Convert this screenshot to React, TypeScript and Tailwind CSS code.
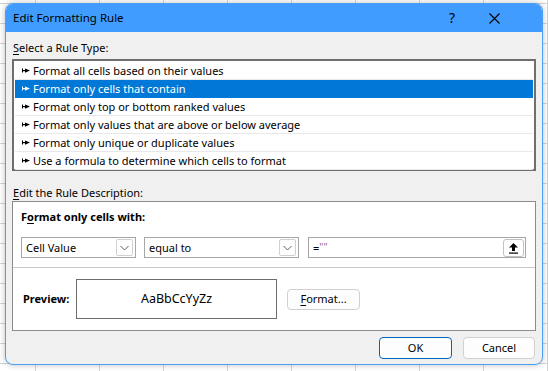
import React from "react";

const font = { fontFamily: '"Noto Sans", "Open Sans", sans-serif' };

function Arrow({ white }: { white?: boolean }) {
  const c = white ? "#ffffff" : "#000000";
  return (
    <svg width="8" height="7" viewBox="0 0 8 7" className="shrink-0">
      <rect x="0" y="1.5" width="1" height="4" fill={c} />
      <rect x="1" y="3" width="3" height="1.2" fill={c} />
      <path d="M3 1.5 L8 3.6 L3 5.7 Z" fill={c} />
    </svg>
  );
}

function Chevron() {
  return (
    <svg width="9" height="6" viewBox="0 0 9 6">
      <path d="M0.5 1 L4.5 5 L8.5 1" fill="none" stroke="#5f5f5f" strokeWidth="1" />
    </svg>
  );
}

const rules = [
  "Format all cells based on their values",
  "Format only cells that contain",
  "Format only top or bottom ranked values",
  "Format only values that are above or below average",
  "Format only unique or duplicate values",
  "Use a formula to determine which cells to format",
];

export default function App() {
  return (
    <div
      className="w-[548px] h-[371px] overflow-hidden bg-white bg-[linear-gradient(to_right,#d4d4d4_1px,transparent_1px),linear-gradient(to_bottom,#d4d4d4_1px,transparent_1px)] bg-[size:64px_20px] bg-[position:35px_3px] pt-[3px] pl-[5px]"
      style={font}
    >
      <div className="w-[538px] h-[362px] flex flex-col bg-[#f0f0f0] border border-[#4a9ff5] rounded-lg overflow-hidden shadow-[0_0_6px_rgba(0,0,0,0.25)] text-[11px] text-black">
        {/* Title bar */}
        <div className="h-[28px] shrink-0 bg-[#409cff] flex items-center pl-[7px]">
          <span className="text-[11.5px] leading-none">Edit Formatting Rule</span>
          <div className="flex-1" />
          <span className="text-[14px] leading-none mr-[34px] mt-[-1px]">?</span>
          <svg width="11" height="11" viewBox="0 0 11 11" className="mr-[42px]">
            <path d="M0.5 0.5 L10.5 10.5 M10.5 0.5 L0.5 10.5" stroke="#000" strokeWidth="1.1" />
          </svg>
        </div>

        {/* Body */}
        <div className="flex flex-col px-[6px]">
          <div className="mt-[8px] ml-[1px] h-[16px] leading-[16px]">
            <span className="underline underline-offset-2">S</span>elect a Rule Type:
          </div>
          <div className="mt-[3px] h-[112px] border-2 border-[#6f6f6f] bg-white p-[1px] flex flex-col">
            {rules.map((r, i) => {
              const sel = i === 1;
              return (
                <div
                  key={r}
                  className={
                    "h-[18px] shrink-0 flex items-center gap-[3px] pl-[7px] border-b " +
                    (sel ? "bg-[#0078d7] text-white border-[#0078d7]" : "text-black border-[#e8e8e8]")
                  }
                >
                  <Arrow white={sel} />
                  <span className="leading-none">{r}</span>
                </div>
              );
            })}
          </div>

          <div className="mt-[14px] ml-[1px] h-[16px] leading-[16px]">
            <span className="underline underline-offset-2">E</span>dit the Rule Description:
          </div>
          <div className="mt-[0px] h-[130px] border border-[#8c8c8c] bg-white flex flex-col">
            <div className="h-[66px] shrink-0 border-b border-[#c8c8c8] flex flex-col pl-[8px]">
              <div className="mt-[7px] font-bold leading-[16px] h-[16px]">
                F<span className="underline underline-offset-2">o</span>rmat only cells with:
              </div>
              <div className="mt-[12px] flex items-center">
                <div className="w-[115px] h-[21px] border border-[#a6a6a6] flex items-center justify-between pl-[4px] pr-[2px]">
                  <span className="leading-none">Cell Value</span>
                  <div className="w-[17px] h-[17px] border border-[#d0d0d0] rounded-[2px] flex items-center justify-center bg-white">
                    <Chevron />
                  </div>
                </div>
                <div className="ml-[8px] w-[155px] h-[21px] border border-[#a6a6a6] flex items-center justify-between pl-[4px] pr-[2px]">
                  <span className="leading-none">equal to</span>
                  <div className="w-[17px] h-[17px] border border-[#d0d0d0] rounded-[2px] flex items-center justify-center bg-white">
                    <Chevron />
                  </div>
                </div>
                <div className="ml-[9px] w-[218px] h-[21px] border border-[#a6a6a6] flex items-center justify-between pl-[4px] pr-[1px]">
                  <span className="leading-none">
                    =<span className="text-[#9a6a8a] text-[10px] align-top">""</span>
                  </span>
                  <div className="w-[21px] h-[18px] border border-[#c0c0c0] rounded-[3px] flex items-center justify-center bg-white">
                    <svg width="11" height="12" viewBox="0 0 11 12">
                      <path d="M5.5 1 L1 5.5 H4 V9 H7 V5.5 H10 Z" fill="#000" />
                      <rect x="1" y="10.5" width="9" height="1.2" fill="#000" />
                    </svg>
                  </div>
                </div>
              </div>
            </div>
            <div className="flex-1 flex items-center pl-[10px]">
              <span className="font-bold w-[53px]">Preview:</span>
              <div className="w-[201px] h-[40px] border border-[#6d6d6d] flex items-center justify-center text-[12.5px]">
                AaBbCcYyZz
              </div>
              <div className="ml-[10px] w-[73px] h-[21px] border border-[#d0d0d0] rounded-[4px] bg-[#fdfdfd] flex items-center justify-center">
                <span>
                  <span className="underline underline-offset-2">F</span>ormat...
                </span>
              </div>
            </div>
          </div>

          <div className="mt-[6px] flex justify-end pr-[1px]">
            <div className="w-[73px] h-[22px] border border-[#0067c0] rounded-[4px] bg-[#fdfdfd] flex items-center justify-center">
              OK
            </div>
            <div className="ml-[11px] w-[72px] h-[22px] border border-[#d0d0d0] rounded-[4px] bg-[#fdfdfd] flex items-center justify-center">
              Cancel
            </div>
          </div>
        </div>
      </div>
    </div>
  );
}
